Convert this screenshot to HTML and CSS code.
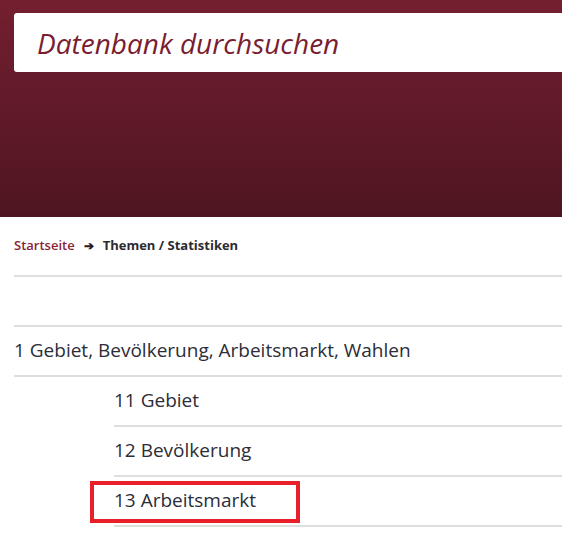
FILE: index.html
```html
<!DOCTYPE html>
<html lang="de">
<head>
<meta charset="utf-8">
<title>Datenbank durchsuchen</title>
<link rel="stylesheet" href="styles.css">
</head>
<body>
<header class="hero">
  <div class="search">
    <input class="search-input" type="text" placeholder="Datenbank durchsuchen">
  </div>
</header>
<main class="content">
  <nav class="crumbs">
    <a class="crumb-link" href="#">Startseite</a>
    <span class="crumb-arrow">&#x2794;</span>
    <span class="crumb-current">Themen / Statistiken</span>
  </nav>
  <div class="spacer-row"></div>
  <ul class="tree">
    <li class="row">1 Gebiet, Bevölkerung, Arbeitsmarkt, Wahlen</li>
    <li>
      <ul class="sub">
        <li class="row">11 Gebiet</li>
        <li class="row">12 Bevölkerung</li>
        <li class="row marked">13 Arbeitsmarkt</li>
      </ul>
    </li>
  </ul>
</main>
</body>
</html>
```
FILE: styles.css
```css
html, body {
  margin: 0;
  padding: 0;
  background: #fff;
}
body {
  font-family: "Open Sans", "Noto Sans", sans-serif;
  color: #2b2d38;
  overflow: hidden;
}
.hero {
  height: 217px;
  box-sizing: border-box;
  padding: 13px 0 0 14px;
  background: linear-gradient(180deg, #741f30 0%, #4e1520 100%);
}
.search {
  height: 59px;
  background: #fff;
  border-radius: 3px 0 0 3px;
  display: flex;
  align-items: center;
  padding-left: 23px;
}
.search-input {
  border: 0;
  outline: 0;
  background: transparent;
  width: 100%;
  font-family: "Open Sans", "Noto Sans", sans-serif;
  font-style: italic;
  font-size: 28px;
  color: #7b1d30;
  padding: 0;
}
.search-input::placeholder {
  color: #7b1d30;
  opacity: 1;
}
.content {
  padding-left: 14px;
}
.crumbs {
  height: 60px;
  box-sizing: border-box;
  display: flex;
  align-items: center;
  gap: 9px;
  font-size: 13px;
  font-weight: 700;
  border-bottom: 2px solid #dedede;
  padding-bottom: 2px;
}
.crumb-link {
  color: #8a1e35;
  text-decoration: none;
  font-weight: 600;
}
.crumb-arrow {
  color: #2a1a1e;
  font-size: 12px;
}
.crumb-current {
  color: #2b2b30;
}
.spacer-row {
  height: 50px;
  box-sizing: border-box;
  border-bottom: 2px solid #dedede;
}
.tree, .sub {
  list-style: none;
  margin: 0;
  padding: 0;
}
.sub {
  padding-left: 100px;
}
.row {
  height: 50px;
  box-sizing: border-box;
  border-bottom: 2px solid #dedede;
  display: flex;
  align-items: center;
  font-size: 19px;
  padding-bottom: 2px;
  position: relative;
}
.marked::after {
  content: "";
  position: absolute;
  left: -24px;
  top: 4px;
  width: 210px;
  height: 42px;
  box-sizing: border-box;
  border: 4px solid #e8202a;
}
```
